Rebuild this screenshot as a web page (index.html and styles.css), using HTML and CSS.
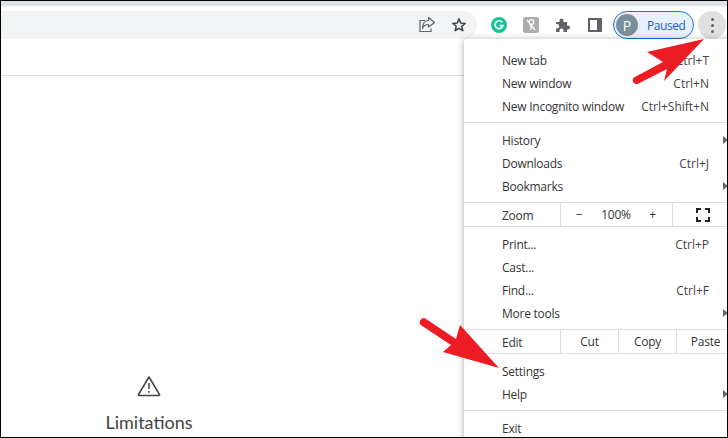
FILE: index.html
```html
<!DOCTYPE html>
<html lang="en">
<head>
<meta charset="utf-8">
<title>Chrome menu</title>
<link rel="stylesheet" href="styles.css">
</head>
<body>
<div class="page">
  <div class="tabstrip"></div>
  <div class="toolbar">
    <div class="omnibox">
      <span class="slot"><svg width="18" height="18" viewBox="0 0 18 18" fill="none" stroke="#5f6368" stroke-width="1.2"><path d="M7 4.500H2v11h11v-3"/><path d="M10.500 1.500 16.500 6.500 10.500 11V8.500C7.500 8.500 5.500 9.500 4.500 12.500 4.500 8 6.500 4.800 10.500 4.500Z" stroke-linejoin="round"/></svg></span>
      <span class="slot"><svg width="16" height="16" viewBox="0 0 16 16" fill="none" stroke="#3c4043" stroke-width="1.500"><path d="M8 1.900 9.700 6 14.200 6.400 10.800 9.300 11.800 13.700 8 11.400 4.200 13.700 5.200 9.300 1.800 6.400 6.300 6Z" stroke-linejoin="round"/></svg></span>
    </div>
    <div class="actions">
      <span class="slot"><svg width="16" height="16" viewBox="0 0 16 16"><circle cx="8" cy="8" r="8" fill="#15c39a"/><path d="M11.300 5.300A4 4 0 1 0 12 8.600H8.700" fill="none" stroke="#fff" stroke-width="1.600"/></svg></span>
      <span class="slot"><svg width="16" height="16" viewBox="0 0 16 16"><rect width="16" height="16" rx="2.500" fill="#adadad"/><circle cx="8.500" cy="5" r="2.300" fill="none" stroke="#fff" stroke-width="1.300"/><path d="M8 7v6M4 3l8 10" stroke="#fff" stroke-width="1.300"/></svg></span>
      <span class="slot"><svg width="16" height="16" viewBox="0 0 16 16"><path d="M1 5h3.500V3.500a2 2 0 0 1 4 0V5H12v3.500h1a2 2 0 0 1 0 4h-1V15H8.500v-1.500a2 2 0 0 0-4 0V15H1v-3.500h1a2.200 2.200 0 0 0 0-4.400H1Z" fill="#5f6368"/></svg></span>
      <span class="slot"><svg width="14" height="14" viewBox="0 0 14 14"><path fill-rule="evenodd" d="M0 0h14v14H0ZM2 2v10h7V2Z" fill="#5f6368"/></svg></span>
      <div class="profile"><span class="avatar">P</span><span class="paused">Paused</span></div>
      <div class="more"><i></i><i></i><i></i></div>
    </div>
  </div>
  <div class="subheader"></div>
  <div class="content">
    <div class="feature">
      <svg width="24" height="22" viewBox="0 0 24 22" fill="none" stroke="#444" stroke-width="1.500"><path d="M12 2 22.500 19.500a.6.6 0 0 1-.5 1H2a.6.6 0 0 1-.5-1Z" stroke-linejoin="round"/><path d="M12 8v6M12 16v1.800"/></svg>
      <span class="feature-label">Limitations</span>
    </div>
  </div>

  <div class="menu">
    <div class="row"><span>New tab</span><span class="key">Ctrl+T</span></div>
    <div class="row"><span>New window</span><span class="key">Ctrl+N</span></div>
    <div class="row"><span>New Incognito window</span><span class="key">Ctrl+Shift+N</span></div>
    <div class="sep"></div>
    <div class="row sub"><span>History</span></div>
    <div class="row"><span>Downloads</span><span class="key">Ctrl+J</span></div>
    <div class="row sub"><span>Bookmarks</span></div>
    <div class="sep flush"></div>
    <div class="cells zoom">
      <span class="cell-label">Zoom</span>
      <span class="cell steps"><b>−</b><span>100%</span><b>+</b></span>
      <span class="cell"><svg width="14" height="14" viewBox="0 0 14 14" fill="none" stroke="#222" stroke-width="2"><path d="M1 5V1h4M9 1h4v4M13 9v4H9M5 13H1V9"/></svg></span>
    </div>
    <div class="sep tight"></div>
    <div class="row"><span>Print...</span><span class="key">Ctrl+P</span></div>
    <div class="row"><span>Cast...</span></div>
    <div class="row"><span>Find...</span><span class="key">Ctrl+F</span></div>
    <div class="row sub"><span>More tools</span></div>
    <div class="sep flush"></div>
    <div class="cells edit">
      <span class="cell-label">Edit</span>
      <span class="cell">Cut</span>
      <span class="cell">Copy</span>
      <span class="cell">Paste</span>
    </div>
    <div class="sep tight"></div>
    <div class="row"><span>Settings</span></div>
    <div class="row sub"><span>Help</span></div>
    <div class="sep"></div>
    <div class="row"><span>Exit</span></div>
  </div>

  <svg class="arrows" width="728" height="438" viewBox="0 0 728 438">
    <path d="M704 39 647 52 663 62 634 77.500a3.800 3.800 0 0 0 3.500 6.500L667 69 664 81Z" fill="#ed1c24"/>
    <path d="M499 368 460 325 456 339 426 319a3.800 3.800 0 0 0-4.500 6.500L451 345 443 352Z" fill="#ed1c24"/>
  </svg>
</div>
</body>
</html>
```
FILE: styles.css
```css
* { box-sizing: border-box; }
html, body { margin: 0; padding: 0; background: #fff; }
.page {
  position: relative;
  width: 728px;
  height: 438px;
  border: 1px solid #000;
  overflow: hidden;
  display: flex;
  flex-direction: column;
  background: #fff;
  font-family: "Open Sans", "Noto Sans", sans-serif;
}
.tabstrip { height: 5px; background: #dee1e6; flex: none; }
.toolbar {
  flex: none;
  height: 40px;
  padding-top: 5px;
  display: flex;
  align-items: flex-start;
  background: #fff;
}
.omnibox {
  width: 476px;
  height: 28px;
  padding-right: 2px;
  background: #f1f3f4;
  border-radius: 0 14px 14px 0;
  display: flex;
  justify-content: flex-end;
  align-items: center;
}
.slot { width: 32px; height: 28px; display: flex; align-items: center; justify-content: center; flex: none; }
.actions { display: flex; align-items: center; height: 28px; padding-left: 6px; }
.profile {
  margin-left: 2px;
  width: 81px;
  height: 28px;
  border: 1px solid #1a73e8;
  border-radius: 14px;
  background: #e8f0fe;
  display: flex;
  align-items: center;
  padding-left: 2px;
  gap: 9px;
}
.avatar {
  width: 22px;
  height: 22px;
  border-radius: 50%;
  background: #78909c;
  color: #fff;
  display: flex;
  align-items: center;
  justify-content: center;
  font-size: 14px;
}
.paused { color: #1a5fc8; font-size: 12px; letter-spacing: -.45px; }
.more {
  margin-left: 4px;
  width: 28px;
  height: 28px;
  border-radius: 50%;
  background: #e0e0e0;
  display: flex;
  flex-direction: column;
  align-items: center;
  justify-content: center;
  gap: 3px;
}
.more i { width: 3px; height: 3px; border-radius: 50%; background: #5f6368; }
.subheader { flex: none; height: 30px; border-bottom: 1px solid #dadce0; }
.content { flex: 1; padding-top: 299px; width: 300px; }
.feature {
  width: 296px;
  display: flex;
  flex-direction: column;
  align-items: center;
  gap: 13px;
}
.feature-label { font-family: Lato, "Open Sans", sans-serif; font-size: 18px; line-height: 24px; color: #444; }

.menu {
  position: absolute;
  left: 463px;
  top: 38px;
  width: 280px;
  height: 420px;
  padding-top: 10px;
  background: #fff;
  border-radius: 3px 0 0 0;
  box-shadow: 0 1px 7px rgba(0, 0, 0, .35);
  font-size: 12px;
  letter-spacing: -.25px;
  color: #333;
}
.row {
  position: relative;
  width: 264px;
  height: 23px;
  padding: 0 19px 0 38px;
  display: flex;
  align-items: center;
  justify-content: space-between;
}
.key { color: #444; letter-spacing: 0; }
.sub::after {
  content: "";
  position: absolute;
  right: 0;
  top: 7px;
  border-left: 5px solid #666;
  border-top: 4px solid transparent;
  border-bottom: 4px solid transparent;
}
.sep { width: 264px; height: 1px; margin: 4px 0 6px; background: #dadce0; }
.sep.tight { margin-top: 0; }
.sep.flush { margin-bottom: 0; }
.cells { width: 264px; height: 23px; display: grid; align-items: stretch; }
.zoom { grid-template-columns: 96px 112px 60px; }
.edit { grid-template-columns: 96px 58px 58px 58px; }
.cell-label { padding: 2px 0 0 38px; display: flex; align-items: center; }
.cell {
  border-left: 1px solid #dadce0;
  display: flex;
  align-items: center;
  justify-content: center;
}
.steps { justify-content: space-between; padding: 0 16px 0 15px; }
.steps b { font-weight: 400; }
.arrows { position: absolute; left: -1px; top: -1px; pointer-events: none; }
```
